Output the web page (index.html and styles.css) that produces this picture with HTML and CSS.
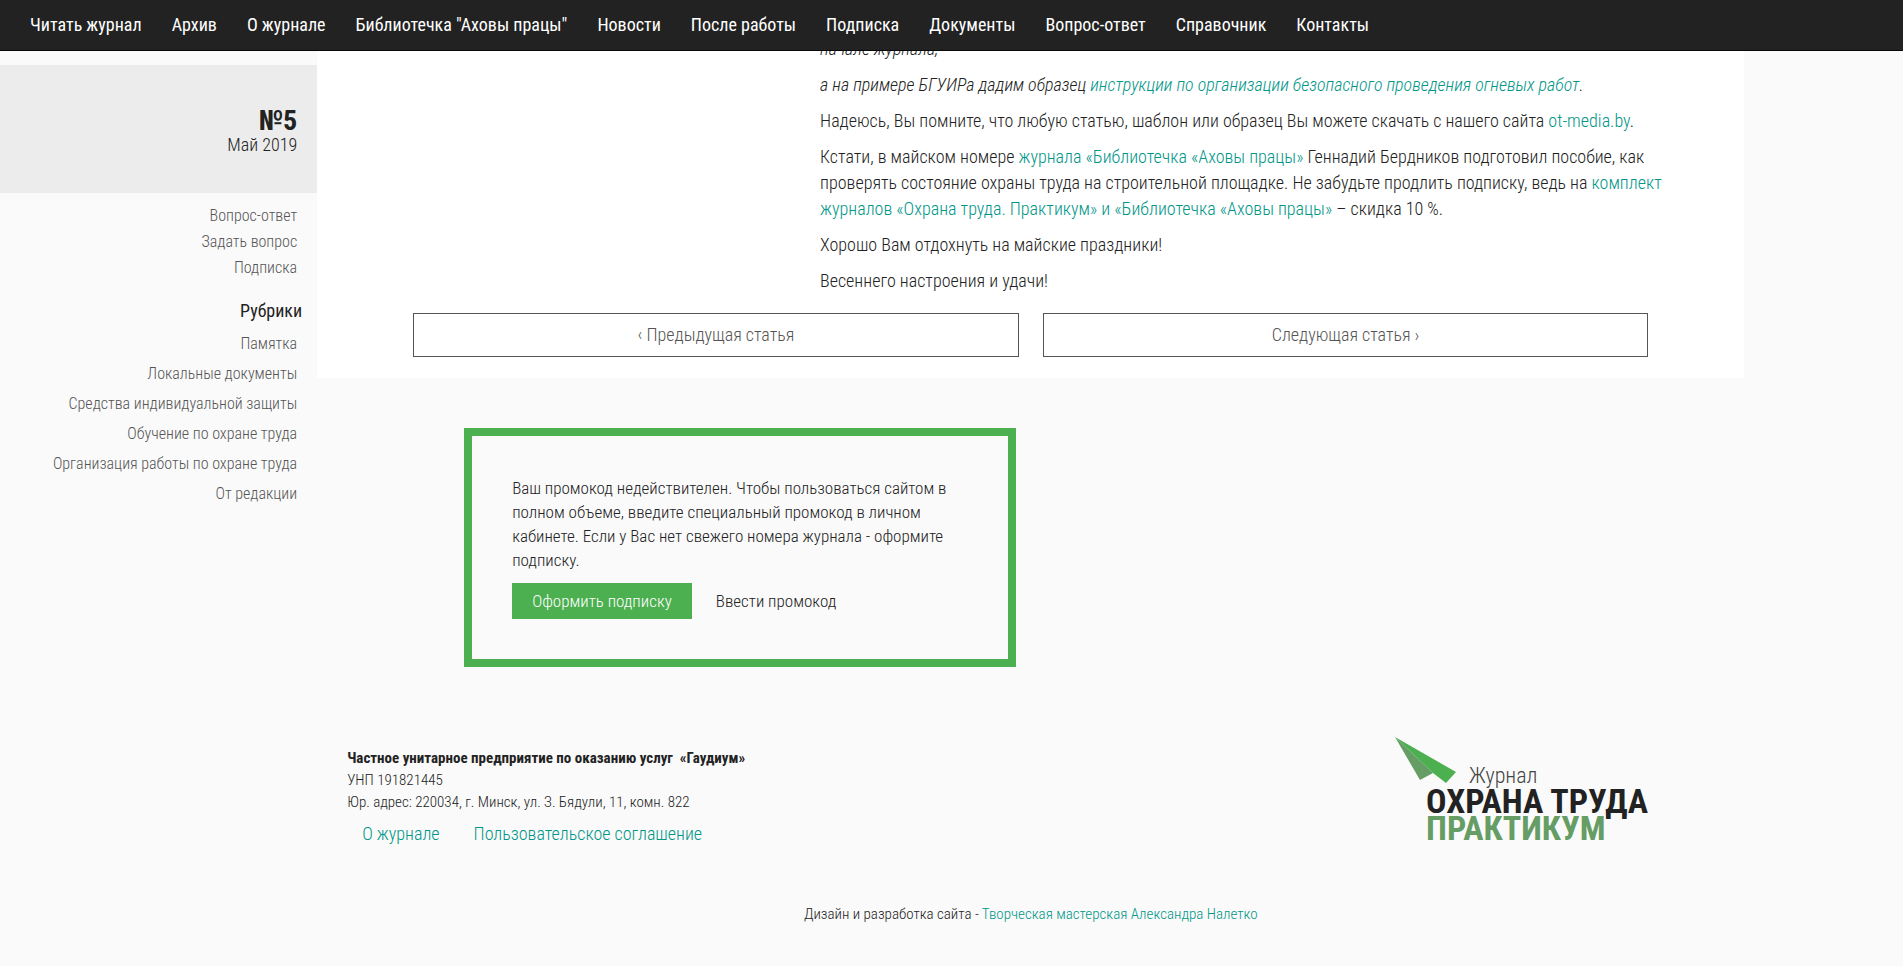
FILE: index.html
```
<!DOCTYPE html>
<html lang="ru">
<head>
    <meta charset="UTF-8">
    <meta name="viewport" content="width=device-width, initial-scale=1.0">
    <title>Охрана труда. Практикум</title>
    <link rel="stylesheet" href="styles.css">
</head>
<body>
    <nav class="navbar">
        <a href="#">Читать журнал</a>
        <a href="#">Архив</a>
        <a href="#">О журнале</a>
        <a href="#">Библиотечка "Аховы працы"</a>
        <a href="#">Новости</a>
        <a href="#">После работы</a>
        <a href="#">Подписка</a>
        <a href="#">Документы</a>
        <a href="#">Вопрос-ответ</a>
        <a href="#">Справочник</a>
        <a href="#">Контакты</a>
    </nav>

    <div class="page">
        <aside class="sidebar">
            <div class="issue">
                <div class="issue-number">№5</div>
                <div class="issue-date">Май 2019</div>
            </div>
            <ul class="side-links">
                <li><a href="#">Вопрос-ответ</a></li>
                <li><a href="#">Задать вопрос</a></li>
                <li><a href="#">Подписка</a></li>
            </ul>
            <h4 class="side-title">Рубрики</h4>
            <ul class="side-links rubrics">
                <li><a href="#">Памятка</a></li>
                <li><a href="#">Локальные документы</a></li>
                <li><a href="#">Средства индивидуальной защиты</a></li>
                <li><a href="#">Обучение по охране труда</a></li>
                <li><a href="#">Организация работы по охране труда</a></li>
                <li><a href="#">От редакции</a></li>
            </ul>
        </aside>

        <div class="content">
            <main class="article-wrap">
                <article class="article">
                    <p><em>начале журнала,</em></p>
                    <p><em>а на примере БГУИРа дадим образец <a href="#">инструкции по организации безопасного проведения огневых работ</a>.</em></p>
                    <p>Надеюсь, Вы помните, что любую статью, шаблон или образец Вы можете скачать с нашего сайта <a href="#">ot-media.by</a>.</p>
                    <p>Кстати, в майском номере <a href="#">журнала «Библиотечка «Аховы працы»</a> Геннадий Бердников подготовил пособие, как проверять состояние охраны труда на строительной площадке. Не забудьте продлить подписку, ведь на <a href="#">комплект журналов «Охрана труда. Практикум» и «Библиотечка «Аховы працы»</a> – скидка 10 %.</p>
                    <p>Хорошо Вам отдохнуть на майские праздники!</p>
                    <p>Весеннего настроения и удачи!</p>
                </article>
                <div class="pager">
                    <a href="#">‹ Предыдущая статья</a>
                    <a href="#">Следующая статья ›</a>
                </div>
            </main>

            <section class="promo">
                <p>Ваш промокод недействителен. Чтобы пользоваться сайтом в полном объеме, введите специальный промокод в личном кабинете. Если у Вас нет свежего номера журнала - оформите подписку.</p>
                <div class="promo-buttons">
                    <button type="button" class="btn btn-green">Оформить подписку</button>
                    <button type="button" class="btn">Ввести промокод</button>
                </div>
            </section>

            <footer class="footer">
                <div class="footer-row">
                    <div class="company">
                        <div><strong>Частное унитарное предприятие по оказанию услуг &nbsp;«Гаудиум»</strong></div>
                        <div>УНП 191821445</div>
                        <div>Юр. адрес: 220034, г. Минск, ул. З. Бядули, 11, комн. 822</div>
                        <div class="footer-links">
                            <a href="#">О журнале</a>
                            <a href="#">Пользовательское соглашение</a>
                        </div>
                    </div>
                    <svg class="logo" width="258" height="112" viewBox="0 0 258 112" role="img" aria-label="Журнал Охрана труда Практикум">
                        <polygon points="0,0 25,43 38,36" fill="#659d65"/>
                        <polygon points="0,0 61,35 51,46 38,36" fill="#4caf50"/>
                        <text class="logo-small" x="74" y="46">Журнал</text>
                        <text class="logo-big" x="31" y="76">ОХРАНА ТРУДА</text>
                        <text class="logo-big logo-green" x="31" y="103">ПРАКТИКУМ</text>
                    </svg>
                </div>
                <p class="credits">Дизайн и разработка сайта - <a href="#">Творческая мастерская Александра Налетко</a></p>
            </footer>
        </div>
    </div>
</body>
</html>
```
FILE: styles.css
```
* {
    box-sizing: border-box;
}
body {
    margin: 0;
    font-family: 'Roboto Condensed', Roboto, sans-serif;
    font-size: 18px;
    font-weight: 300;
    line-height: 26px;
    color: #222;
    background-color: #fafafa;
}
a {
    color: #009688;
    text-decoration: none;
}
p {
    margin: 0 0 10px;
}
ul {
    list-style: none;
    margin: 0;
    padding: 0;
}
strong {
    font-weight: 700;
}
.navbar {
    position: fixed;
    top: 0;
    left: 0;
    right: 0;
    z-index: 10;
    display: flex;
    padding: 0 15px;
    background: #222;
    border-bottom: 1px solid #080808;
}
.navbar a {
    padding: 12px 15px;
    color: #fff;
    font-weight: 400;
    white-space: nowrap;
}
.page {
    display: flex;
}
.sidebar {
    width: 16.6667%;
    padding-top: 65px;
    text-align: right;
}
.issue {
    padding: 42px 20px 38px;
    background: #ececec;
}
.issue-number {
    font-size: 28px;
    font-weight: 700;
    line-height: 28px;
}
.issue-date {
    line-height: 20px;
}
.side-links {
    padding: 10px 20px 0 0;
    font-size: 16px;
}
.side-links a {
    color: #555;
}
.side-title {
    margin: 17px 15px 0 0;
    font-size: 18px;
    font-weight: 400;
}
.rubrics {
    padding-top: 5px;
    line-height: 30px;
}
.content {
    width: 75%;
}
.article-wrap {
    padding: 36px 0 21px;
    background: #fff;
}
.article {
    width: 60%;
    margin: 0 68px 0 auto;
}
.pager {
    display: flex;
    gap: 24px;
    margin-top: 19px;
    padding: 0 96px;
}
.pager a {
    flex: 1;
    padding: 8px;
    border: 1px solid #555;
    color: #555;
    text-align: center;
}
.promo {
    max-width: 552px;
    margin: 50px 0 0 147px;
    padding: 40px;
    border: 8px solid #4caf50;
    font-size: 17px;
    line-height: 24px;
}
.promo p {
    margin-bottom: 11px;
}
.promo-buttons {
    display: flex;
    gap: 4px;
}
.btn {
    padding: 6px 20px;
    border: 0;
    background: none;
    color: #222;
    font: inherit;
    cursor: pointer;
}
.btn-green {
    background: #4caf50;
    color: #fff;
}
.footer {
    padding: 70px 91px 0 30px;
    font-size: 15px;
    line-height: 22px;
}
.footer-row {
    display: flex;
    justify-content: space-between;
}
.company {
    padding-top: 10px;
}
.footer-links {
    display: flex;
    gap: 34px;
    margin-top: 10px;
    padding-left: 15px;
    font-size: 18px;
}
.logo-small {
    font-size: 22px;
    fill: #444;
}
.logo-big {
    font-size: 34px;
    font-weight: 700;
    fill: #222;
}
.logo-green {
    fill: #659d65;
}
.credits {
    margin: 54px 0 0;
    padding-left: 61px;
    text-align: center;
}
```
